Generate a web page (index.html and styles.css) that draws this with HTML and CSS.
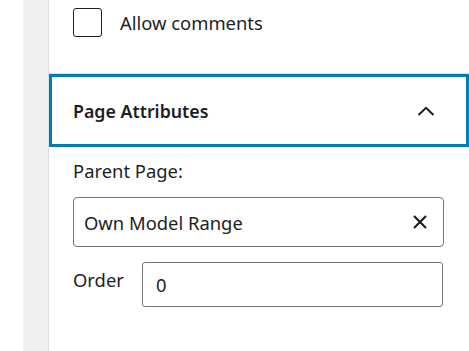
FILE: index.html
```html
<!DOCTYPE html>
<html lang="en">
<head>
    <meta charset="UTF-8">
    <meta name="viewport" content="width=device-width, initial-scale=1.0">
    <title>Page Attributes</title>
    <link rel="stylesheet" href="styles.css">
</head>
<body>
    <div class="layout">
        <div class="gutter"></div>
        <aside class="sidebar">
            <div class="section">
                <label class="check">
                    <span class="check-box"></span>
                    Allow comments
                </label>
            </div>

            <div class="panel">
                <div class="panel-toggle">
                    <span>Page Attributes</span>
                    <svg class="chevron" width="18" height="10" viewBox="0 0 18 10">
                        <path d="M1.5 9 L9 1.8 L16.5 9" fill="none" stroke="#1e1e1e" stroke-width="2"/>
                    </svg>
                </div>

                <div class="panel-body">
                    <label class="field-label">Parent Page:</label>
                    <div class="combo">
                        <span>Own Model Range</span>
                        <svg class="clear" width="16" height="16" viewBox="0 0 16 16">
                            <path d="M2 2 L14 14 M14 2 L2 14" fill="none" stroke="#1e1e1e" stroke-width="2.2"/>
                        </svg>
                    </div>

                    <div class="order-row">
                        <label for="order">Order</label>
                        <input type="text" id="order" value="0">
                    </div>
                </div>
            </div>
        </aside>
    </div>
</body>
</html>
```

FILE: styles.css
```css
body {
    margin: 0;
    background: #fff;
    font-family: 'Noto Sans', 'Open Sans', sans-serif;
    color: #1e1e1e;
}

.layout {
    display: flex;
    height: 351px;
    padding-left: 23px;
}

.gutter {
    width: 25px;
    background-color: #f0f0f0;
}

.sidebar {
    flex: 1;
    border-left: 1px solid #e0e0e0;
    background: #fff;
}

.section {
    padding: 8px 24px 36px;
    border-bottom: 1px solid #e0e0e0;
}

.check {
    display: flex;
    align-items: center;
    gap: 18px;
    font-size: 18.4px;
}

.check-box {
    width: 27px;
    height: 27px;
    border: 1.5px solid #1e1e1e;
    border-radius: 3px;
}

.panel-toggle {
    display: flex;
    align-items: center;
    justify-content: space-between;
    height: 67px;
    padding: 0 31px 0 21px;
    border: 3px solid #007cba;
    font-size: 17.8px;
    font-weight: 600;
}

.panel-body {
    padding: 10px 25px 0 24px;
}

.field-label {
    display: block;
    font-size: 18.4px;
    line-height: 28px;
    margin-bottom: 12px;
}

.combo {
    display: flex;
    align-items: center;
    justify-content: space-between;
    height: 48px;
    padding: 0 15px 0 10px;
    border: 1px solid #757575;
    border-radius: 4px;
    font-size: 18.4px;
}

.order-row {
    display: flex;
    align-items: flex-start;
    margin-top: 15px;
}

.order-row label {
    width: 69px;
    flex: none;
    font-size: 18.4px;
    line-height: 28px;
    padding-top: 4px;
}

.order-row input {
    flex: 1;
    height: 45px;
    margin-right: 1px;
    padding: 0 13px;
    border: 1px solid #757575;
    border-radius: 3px;
    box-sizing: border-box;
    font-family: inherit;
    font-size: 18.4px;
    color: #1e1e1e;
    outline: none;
}
```
